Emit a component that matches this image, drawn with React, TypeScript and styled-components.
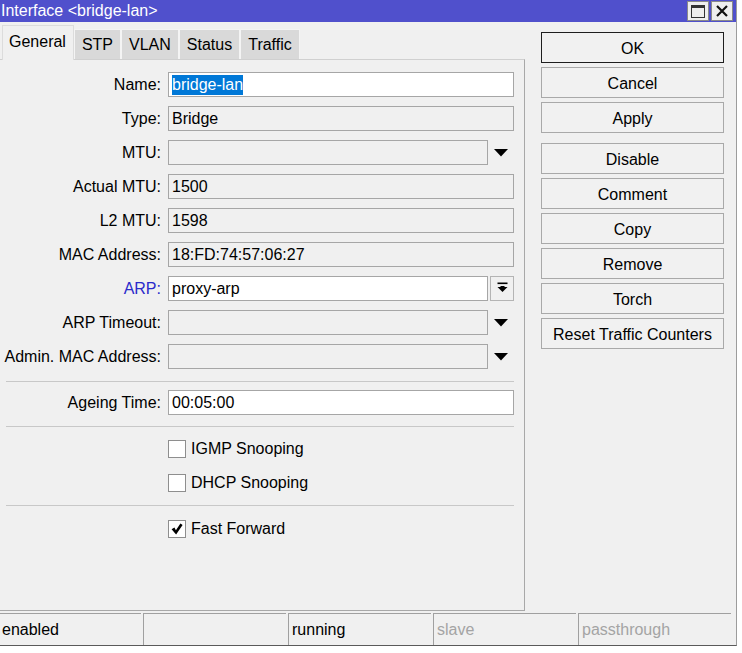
import styled, { createGlobalStyle } from "styled-components";

const GlobalStyle = createGlobalStyle`
  html, body {
    margin: 0;
    padding: 0;
    background: #ffffff;
  }
  body {
    font: 16px "Liberation Sans", Arial, sans-serif;
    color: #000;
  }
`;

type FieldKind = "text" | "combo" | "arp";

interface FieldRow {
  label: string;
  value?: string;
  editable?: boolean;
  selected?: boolean;
  kind: FieldKind;
  accent?: boolean;
}

const mainFields: FieldRow[] = [
  { label: "Name", value: "bridge-lan", editable: true, selected: true, kind: "text" },
  { label: "Type", value: "Bridge", kind: "text" },
  { label: "MTU", kind: "combo" },
  { label: "Actual MTU", value: "1500", kind: "text" },
  { label: "L2 MTU", value: "1598", kind: "text" },
  { label: "MAC Address", value: "18:FD:74:57:06:27", kind: "text" },
  { label: "ARP", value: "proxy-arp", editable: true, kind: "arp", accent: true },
  { label: "ARP Timeout", kind: "combo" },
  { label: "Admin. MAC Address", kind: "combo" },
];

const tabs = ["General", "STP", "VLAN", "Status", "Traffic"];

// buttons on the right, a small gap after "Apply"
const actionButtons = [
  { name: "OK", primary: true },
  { name: "Cancel" },
  { name: "Apply" },
  { name: "Disable", spaced: true },
  { name: "Comment" },
  { name: "Copy" },
  { name: "Remove" },
  { name: "Torch" },
  { name: "Reset Traffic Counters" },
];

const statusCells = [
  { text: "enabled" },
  { text: "" },
  { text: "running" },
  { text: "slave", dim: true },
  { text: "passthrough", dim: true, last: true },
];

const DownTriangle = () => (
  <svg width="14" height="8" viewBox="0 0 14 8">
    <path d="M0 0 H14 L7 7.5 Z" fill="#000" />
  </svg>
);

const ArpIcon = () => (
  <svg width="11" height="13" viewBox="0 0 11 13">
    <rect x="0.5" y="0.5" width="10" height="1.6" fill="#000" />
    <path d="M0.5 5 H10.5 L5.5 10 Z" fill="#000" />
    <rect x="3.5" y="4" width="4" height="3" fill="#000" />
  </svg>
);

const CheckMark = () => (
  <svg width="12" height="12" viewBox="0 0 12 12">
    <path d="M0.6 6.2 L3.4 4.6 L4.9 7.2 L9.4 0.6 L11.6 2 L5.1 11.4 Z" fill="#000" />
  </svg>
);

const MaximizeIcon = () => (
  <svg width="14" height="13" viewBox="0 0 14 13">
    <rect x="0.5" y="0.5" width="13" height="12" fill="none" stroke="#333" strokeWidth="1" />
    <rect x="0.5" y="0.5" width="13" height="2.5" fill="#333" />
  </svg>
);

const CloseIcon = () => (
  <svg width="12" height="12" viewBox="0 0 12 12">
    <path d="M1 1 L11 11 M11 1 L1 11" stroke="#111" strokeWidth="2.2" />
  </svg>
);

const App = () => {
  return (
    <>
      <GlobalStyle />
      <WindowFrame>
        <TitleBar>
          <span>Interface &lt;bridge-lan&gt;</span>
          <TitleControls>
            <TitleButton>
              <MaximizeIcon />
            </TitleButton>
            <TitleButton>
              <CloseIcon />
            </TitleButton>
          </TitleControls>
        </TitleBar>

        <Body>
          <LeftColumn>
            <TabRow>
              {tabs.map((tab, i) => (
                <Tab key={tab} $active={i === 0}>
                  {tab}
                </Tab>
              ))}
            </TabRow>
            <Panel>
              {mainFields.map((field) => (
                <FormRow key={field.label}>
                  <Label $accent={field.accent}>{field.label}:</Label>
                  <FieldWrap>
                    <InputBox $editable={field.editable}>
                      {field.selected ? <Selected>{field.value}</Selected> : field.value}
                    </InputBox>
                    {field.kind === "combo" && (
                      <ComboArrow>
                        <DownTriangle />
                      </ComboArrow>
                    )}
                    {field.kind === "arp" && (
                      <SmallButton>
                        <ArpIcon />
                      </SmallButton>
                    )}
                  </FieldWrap>
                </FormRow>
              ))}

              <Separator $top={3} $bottom={8} />

              <FormRow>
                <Label>Ageing Time:</Label>
                <FieldWrap>
                  <InputBox $editable>00:05:00</InputBox>
                </FieldWrap>
              </FormRow>

              <Separator $top={2} $bottom={9} />

              <FormRow>
                <span />
                <CheckRow>
                  <CheckBox />
                  IGMP Snooping
                </CheckRow>
              </FormRow>
              <FormRow>
                <span />
                <CheckRow>
                  <CheckBox />
                  DHCP Snooping
                </CheckRow>
              </FormRow>

              <Separator $top={1} $bottom={10} />

              <FormRow>
                <span />
                <CheckRow>
                  <CheckBox>
                    <CheckMark />
                  </CheckBox>
                  Fast Forward
                </CheckRow>
              </FormRow>
            </Panel>
          </LeftColumn>

          <ButtonColumn>
            {actionButtons.map((btn) => (
              <ActionButton key={btn.name} $primary={btn.primary} $spaced={btn.spaced}>
                {btn.name}
              </ActionButton>
            ))}
          </ButtonColumn>
        </Body>

        <StatusBar>
          {statusCells.map((cell, i) => (
            <StatusCell key={i} $dim={cell.dim} $last={cell.last}>
              {cell.text}
            </StatusCell>
          ))}
        </StatusBar>
      </WindowFrame>
    </>
  );
};

const WindowFrame = styled.div`
  display: flex;
  flex-direction: column;
  width: 737px;
  height: 646px;
  background: #f0f0f0;
  border-right: 1px solid #9c9c9c;
  border-bottom: 1px solid #5a5a5a;
  box-sizing: border-box;
  overflow: hidden;
`;

const TitleBar = styled.div`
  display: flex;
  align-items: center;
  justify-content: space-between;
  height: 22px;
  padding: 0 3px 0 1px;
  background: #5050cc;
  color: #ffffff;
  font-size: 16px;
  flex-shrink: 0;
`;

const TitleControls = styled.div`
  display: flex;
  gap: 2px;
  align-self: flex-start;
  padding-top: 1px;
`;

const TitleButton = styled.div`
  display: flex;
  align-items: center;
  justify-content: center;
  width: 22px;
  height: 20px;
  box-sizing: border-box;
  background: #eeeeee;
  border: 1px solid #8a8a8a;
`;

const Body = styled.div`
  display: flex;
  flex: 1;
  min-height: 0;
`;

const LeftColumn = styled.div`
  display: flex;
  flex-direction: column;
  width: 525px;
  padding: 3px 0 1px;
  box-sizing: border-box;
`;

const TabRow = styled.div`
  display: flex;
  align-items: flex-end;
  height: 34px;
  padding-left: 2px;
  position: relative;
  z-index: 1;
`;

const Tab = styled.div<{ $active?: boolean }>`
  display: flex;
  align-items: center;
  box-sizing: border-box;
  height: ${(p) => (p.$active ? "35px" : "30px")};
  padding: ${(p) => (p.$active ? "0 7px 3px 6px" : "1px 7px 0")};
  margin-bottom: ${(p) => (p.$active ? "-1px" : "0")};
  background: ${(p) => (p.$active ? "#f0f0f0" : "#d9d9d9")};
  border: 1px solid ${(p) => (p.$active ? "#dcdcdc" : "#f4f4f4")};
  border-bottom: none;
  font-size: 16px;
  white-space: nowrap;
`;

const Panel = styled.div`
  display: flex;
  flex-direction: column;
  flex: 1;
  padding: 12px 10px 0 0;
  border-top: 1px solid #d0d0d0;
  border-right: 1px solid #a8a8a8;
  border-bottom: 1px solid #a8a8a8;
`;

const FormRow = styled.div`
  display: grid;
  grid-template-columns: 161px 1fr;
  column-gap: 7px;
  align-items: center;
  height: 25px;
  margin-bottom: 9px;
  flex-shrink: 0;
`;

const Label = styled.div<{ $accent?: boolean }>`
  text-align: right;
  white-space: nowrap;
  color: ${(p) => (p.$accent ? "#2a2acb" : "#000")};
`;

const FieldWrap = styled.div`
  display: flex;
  height: 25px;
`;

const InputBox = styled.div<{ $editable?: boolean }>`
  flex: 1;
  display: flex;
  align-items: center;
  box-sizing: border-box;
  height: 25px;
  padding: 0 3px;
  background: ${(p) => (p.$editable ? "#ffffff" : "#f0f0f0")};
  border: 1px solid #a6a6a6;
  white-space: nowrap;
`;

const Selected = styled.span`
  background: #0078d7;
  color: #ffffff;
  line-height: 20px;
`;

const ComboArrow = styled.div`
  display: flex;
  align-items: center;
  justify-content: center;
  width: 26px;
`;

const SmallButton = styled.div`
  display: flex;
  align-items: center;
  justify-content: center;
  width: 24px;
  margin-left: 2px;
  box-sizing: border-box;
  border: 1px solid #b4b4b4;
  background: #f0f0f0;
`;

const Separator = styled.div<{ $top: number; $bottom: number }>`
  flex-shrink: 0;
  height: 1px;
  margin: ${(p) => `${p.$top}px 0 ${p.$bottom}px 6px`};
  background: #c8c8c8;
`;

const CheckRow = styled.div`
  display: flex;
  align-items: center;
  gap: 5px;
`;

const CheckBox = styled.div`
  display: flex;
  align-items: center;
  justify-content: center;
  width: 18px;
  height: 18px;
  box-sizing: border-box;
  background: #ffffff;
  border: 1px solid #8e8e8e;
`;

const ButtonColumn = styled.div`
  display: flex;
  flex-direction: column;
  width: 183px;
  padding: 10px 0 0 16px;
`;

const ActionButton = styled.div<{ $primary?: boolean; $spaced?: boolean }>`
  display: flex;
  align-items: center;
  justify-content: center;
  height: 31px;
  box-sizing: border-box;
  padding-top: 2px;
  margin-top: ${(p) => (p.$spaced ? "6px" : "0")};
  margin-bottom: 4px;
  background: #f1f1f1;
  border: 1px solid ${(p) => (p.$primary ? "#1e1e1e" : "#a9a9a9")};
  white-space: nowrap;
`;

const StatusBar = styled.div`
  display: flex;
  gap: 2px;
  height: 32px;
  padding: 1px 5px 0 0;
  margin-left: -2px;
  flex-shrink: 0;
`;

const StatusCell = styled.div<{ $dim?: boolean; $last?: boolean }>`
  display: flex;
  align-items: center;
  width: ${(p) => (p.$last ? "auto" : "143px")};
  flex: ${(p) => (p.$last ? "1" : "0 0 auto")};
  padding-left: 3px;
  box-sizing: border-box;
  border-top: 1px solid #a0a0a0;
  border-left: 1px solid #a0a0a0;
  color: ${(p) => (p.$dim ? "#a4a4a4" : "#000")};
  white-space: nowrap;
`;

export default App;
